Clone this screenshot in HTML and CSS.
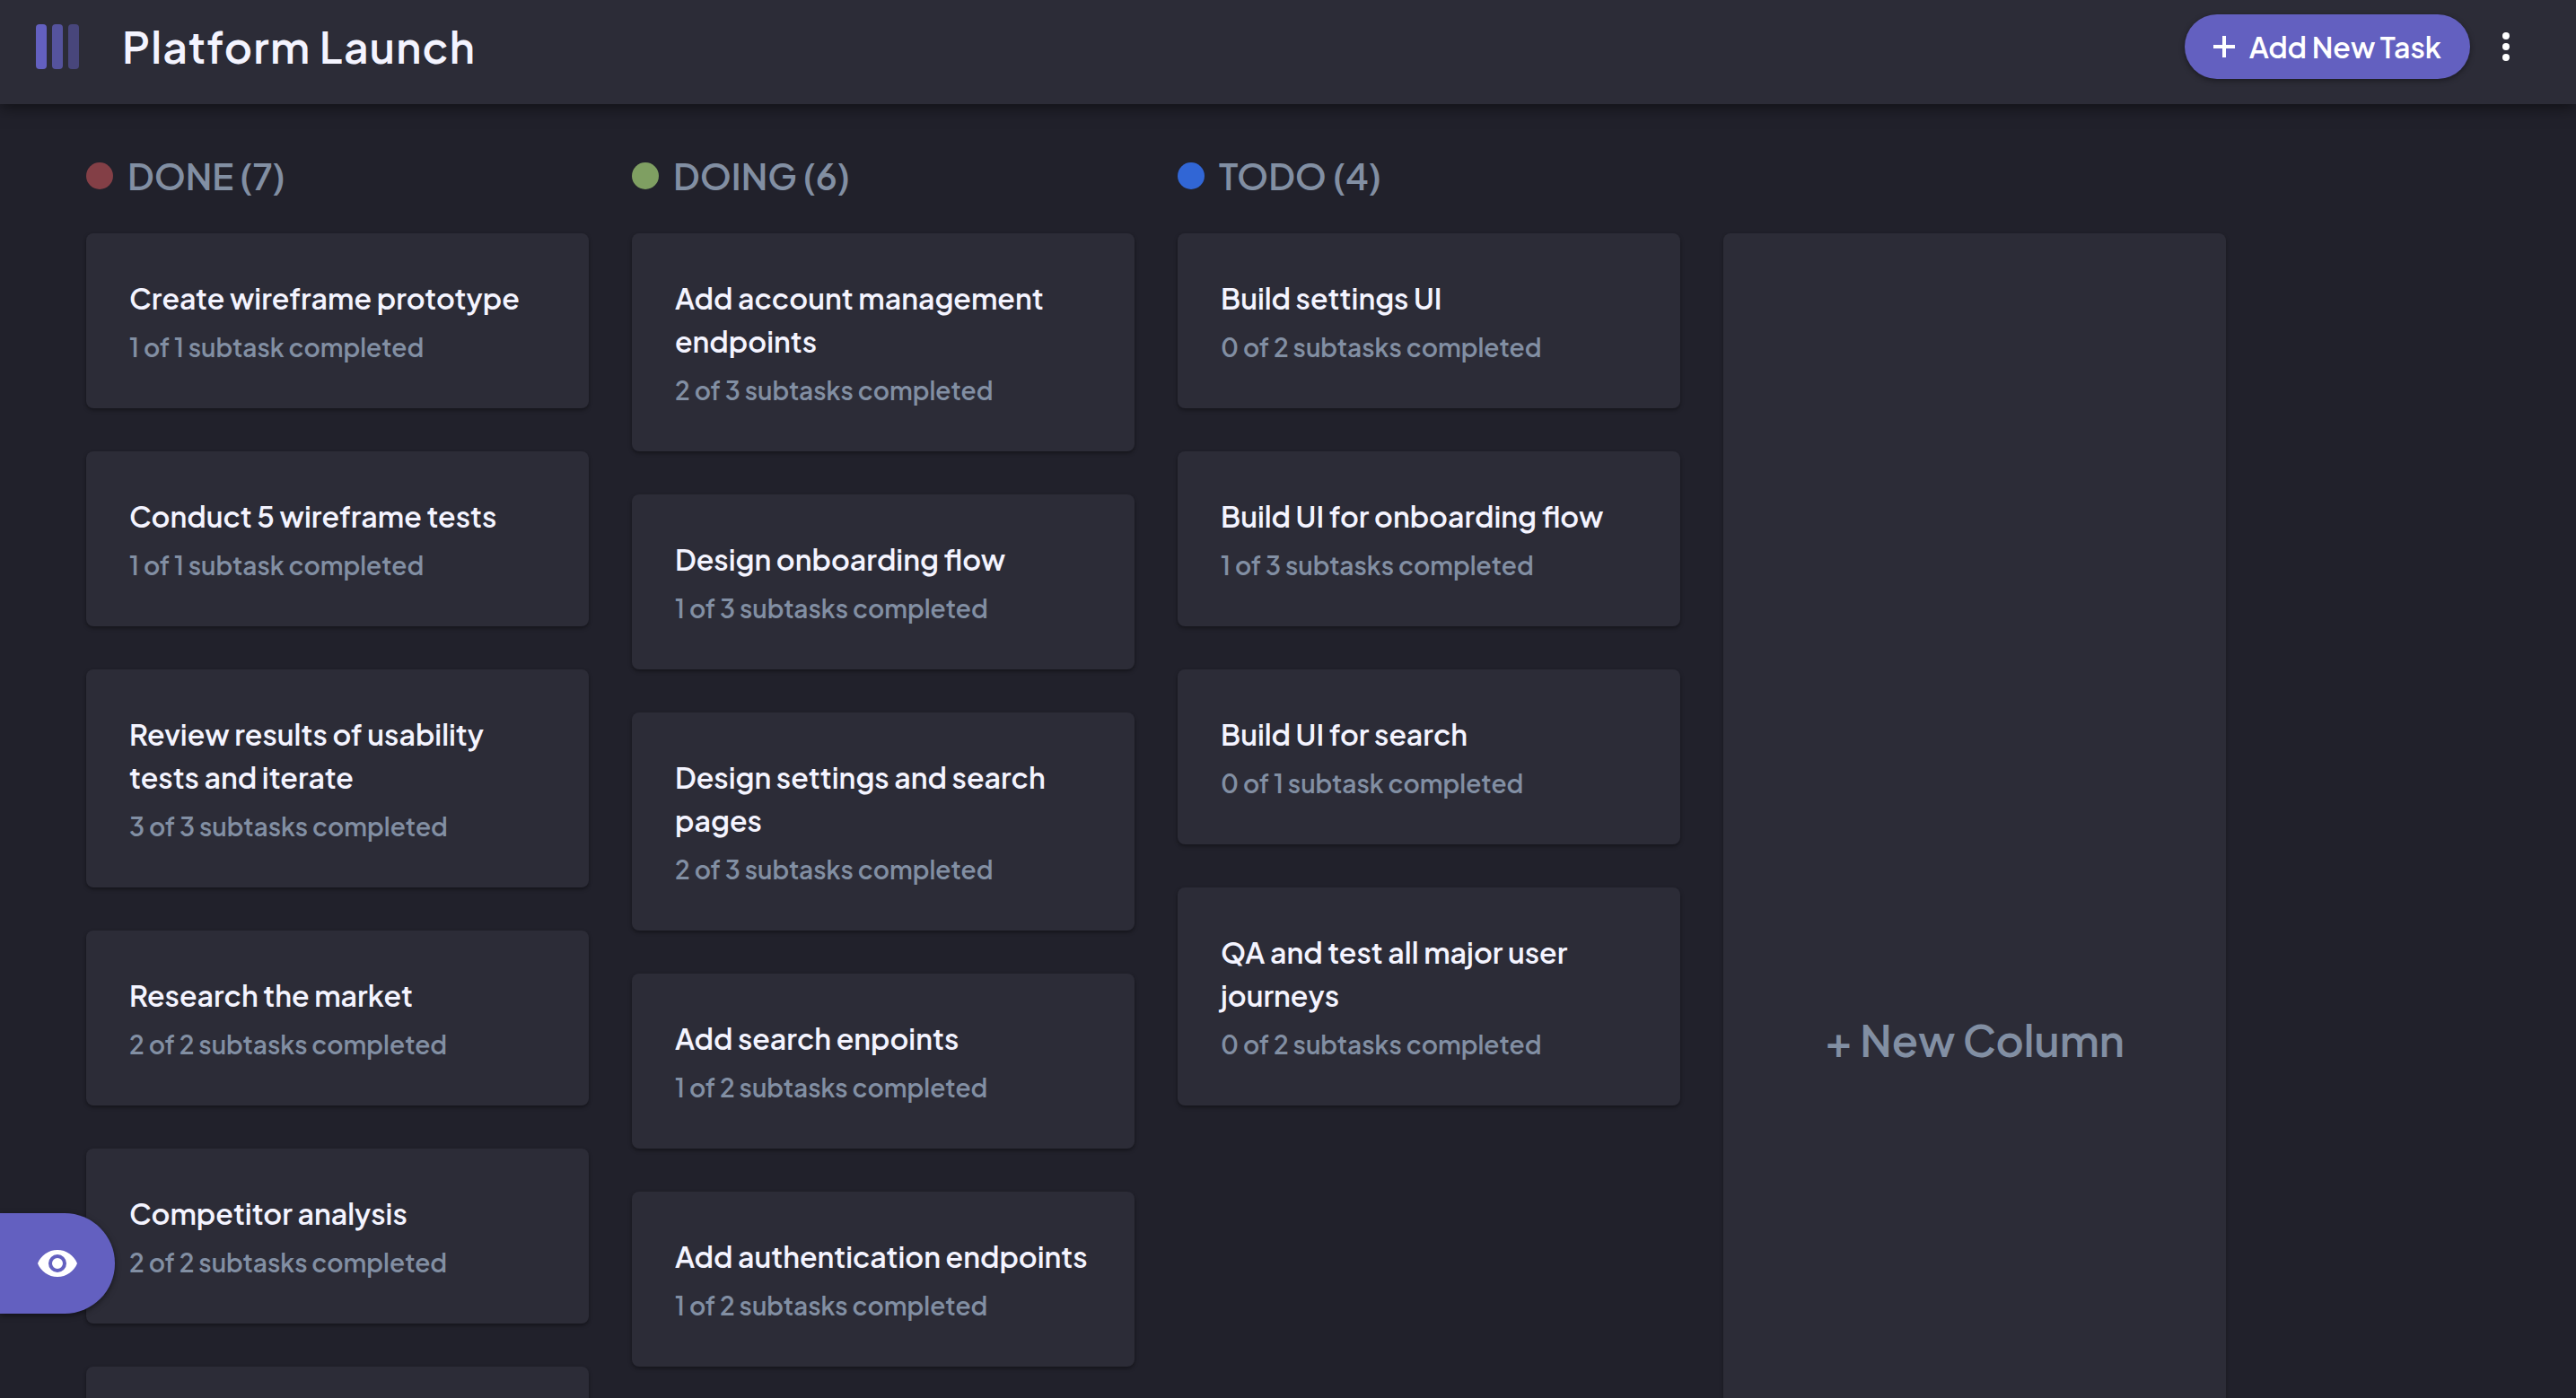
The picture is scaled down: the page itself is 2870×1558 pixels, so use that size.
FILE: index.html
```
<!DOCTYPE html>
<html lang="en">
<head>
<meta charset="utf-8">
<title>Platform Launch</title>
<link rel="stylesheet" href="styles.css">
</head>
<body>
<header class="topbar">
  <div class="brand">
    <svg class="logo" viewBox="0 0 48 50" aria-hidden="true"><rect width="12" height="50" rx="4"/><rect x="18" width="12" height="50" rx="4" opacity=".75"/><rect x="36" width="12" height="50" rx="4" opacity=".5"/></svg>
    <h1 class="board-title">Platform Launch</h1>
  </div>
  <div class="actions">
    <button class="add-task" type="button"><svg class="plus" viewBox="0 0 24 24" aria-hidden="true"><path d="M10 0h4v10h10v4H14v10h-4V14H0v-4h10z"/></svg>Add New Task</button>
    <button class="menu" type="button" aria-label="Board options"><svg class="dots" viewBox="0 0 8 32" aria-hidden="true"><circle cx="4" cy="4" r="4"/><circle cx="4" cy="16" r="4"/><circle cx="4" cy="28" r="4"/></svg></button>
  </div>
</header>
<main class="board">
  <section class="column">
    <h2 class="column-title"><span class="dot dot-done"></span>DONE (7)</h2>
    <article class="card"><h3>Create wireframe prototype</h3><p>1 of 1 subtask completed</p></article>
    <article class="card"><h3>Conduct 5 wireframe tests</h3><p>1 of 1 subtask completed</p></article>
    <article class="card"><h3>Review results of usability tests and iterate</h3><p>3 of 3 subtasks completed</p></article>
    <article class="card"><h3>Research the market</h3><p>2 of 2 subtasks completed</p></article>
    <article class="card"><h3>Competitor analysis</h3><p>2 of 2 subtasks completed</p></article>
    <article class="card card-blank"></article>
    <article class="card card-blank"></article>
  </section>
  <section class="column">
    <h2 class="column-title"><span class="dot dot-doing"></span>DOING (6)</h2>
    <article class="card"><h3>Add account management endpoints</h3><p>2 of 3 subtasks completed</p></article>
    <article class="card"><h3>Design onboarding flow</h3><p>1 of 3 subtasks completed</p></article>
    <article class="card"><h3>Design settings and search pages</h3><p>2 of 3 subtasks completed</p></article>
    <article class="card"><h3>Add search enpoints</h3><p>1 of 2 subtasks completed</p></article>
    <article class="card"><h3>Add authentication endpoints</h3><p>1 of 2 subtasks completed</p></article>
  </section>
  <section class="column">
    <h2 class="column-title"><span class="dot dot-todo"></span>TODO (4)</h2>
    <article class="card"><h3>Build settings UI</h3><p>0 of 2 subtasks completed</p></article>
    <article class="card"><h3>Build UI for onboarding flow</h3><p>1 of 3 subtasks completed</p></article>
    <article class="card"><h3>Build UI for search</h3><p>0 of 1 subtask completed</p></article>
    <article class="card"><h3>QA and test all major user journeys</h3><p>0 of 2 subtasks completed</p></article>
  </section>
  <button class="new-column" type="button">+ New Column</button>
</main>
<button class="show-sidebar" type="button" aria-label="Show sidebar"><svg class="eye" viewBox="0 0 44 30" aria-hidden="true"><path fill-rule="evenodd" d="M22 0C12 0 3.500 6.200 0 15c3.500 8.800 12 15 22 15s18.500-6.200 22-15C40.500 6.200 32 0 22 0zm0 25a10 10 0 1 1 0-20 10 10 0 0 1 0 20zm0-4a6 6 0 1 0 0-12 6 6 0 0 0 0 12z"/></svg></button>
</body>
</html>
```
FILE: styles.css
```
* { box-sizing: border-box; margin: 0; }

body {
  display: flex;
  flex-direction: column;
  height: 100vh;
  background: #21212b;
  color: #f4f4ff;
  font-family: "Plus Jakarta Sans", Inter, "Liberation Sans", sans-serif;
  font-weight: 600;
}

button { border: 0; font: inherit; color: #fff; cursor: pointer; }
svg { display: block; fill: currentColor; }

.topbar {
  position: relative;
  display: flex;
  flex: none;
  justify-content: space-between;
  align-items: flex-start;
  height: 116px;
  padding: 16px 58px 0 40px;
  background: #2c2c37;
  box-shadow: 0 4px 16px rgba(0, 0, 0, .5);
}

.brand { display: flex; align-items: center; gap: 48px; height: 72px; }
.logo { width: 48px; height: 50px; color: #6360c0; }
.board-title { font-size: 48px; line-height: 72px; font-weight: 600; letter-spacing: .025em; }

.actions { display: flex; gap: 20px; align-items: center; }

.add-task {
  display: flex;
  align-items: center;
  gap: 16px;
  height: 72px;
  padding: 0 32px;
  border-radius: 36px;
  background: #6360c0;
  font-size: 32px;
  box-shadow: 0 2px 6px rgba(0, 0, 0, .4);
}
.plus { width: 24px; height: 24px; }
.menu { padding: 16px; background: none; }
.dots { width: 8px; height: 32px; }

.board {
  display: flex;
  flex: 1;
  gap: 48px;
  min-height: 0;
  padding: 48px 96px;
  overflow: auto;
  scrollbar-width: none;
}

.column {
  display: flex;
  flex: none;
  flex-direction: column;
  gap: 48px;
  width: 560px;
  height: max-content;
}

.column-title {
  display: flex;
  align-items: center;
  gap: 16px;
  height: 64px;
  margin-bottom: -16px;
  color: #828fa3;
  font-size: 40px;
  line-height: 64px;
  font-weight: 600;
}
.dot { width: 30px; height: 30px; border-radius: 50%; }
.dot-done { background: #833f46; }
.dot-doing { background: #7f9f62; }
.dot-todo { background: #3166d5; }

.card {
  padding: 48px 48px 47px;
  border-radius: 8px;
  background: #2c2c37;
  box-shadow: 0 2px 4px rgba(0, 0, 0, .4);
}
.card h3 { font-size: 32px; line-height: 48px; font-weight: 600; }
.card p { margin-top: 10px; color: #828fa3; font-size: 28px; line-height: 42px; }
.card-blank { min-height: 243px; }

.new-column {
  flex: none;
  width: 560px;
  height: 1796px;
  margin-top: 96px;
  border-radius: 8px;
  background: #2c2c37;
  color: #828fa3;
  font-size: 48px;
  box-shadow: 0 2px 4px rgba(0, 0, 0, .3);
}

.show-sidebar {
  position: fixed;
  left: 0;
  bottom: 94px;
  display: flex;
  align-items: center;
  width: 128px;
  height: 112px;
  padding: 0 42px;
  border-radius: 0 60px 60px 0;
  background: #6360c0;
  box-shadow: 0 2px 6px rgba(0, 0, 0, .5);
}
.eye { flex: none; width: 44px; height: 30px; }
```
